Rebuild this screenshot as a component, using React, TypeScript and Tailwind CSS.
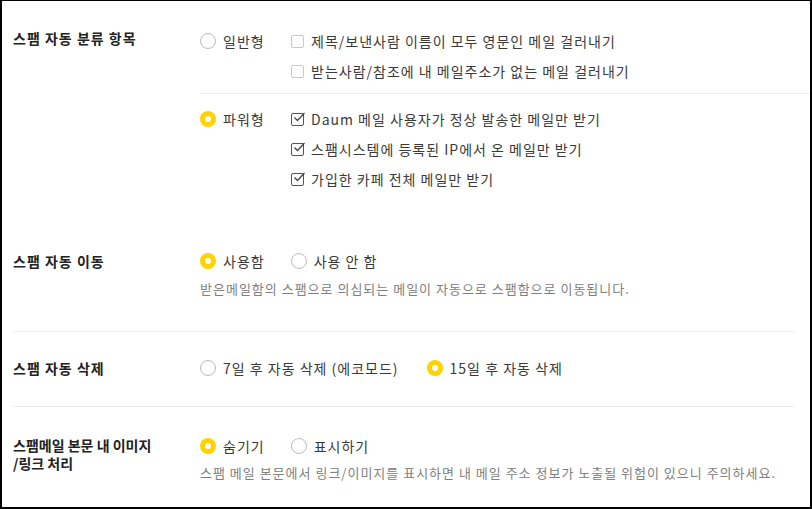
import React from "react";

function Radio({ checked, label }: { checked?: boolean; label: string }) {
    return (
        <label className="flex items-center h-[30px] text-[14px] text-[#3a3a3a]">
            {checked ? (
                <span className="w-4 h-4 rounded-full bg-[#ffd200] flex items-center justify-center">
                    <span className="w-[6px] h-[6px] rounded-full bg-white" />
                </span>
            ) : (
                <span className="w-4 h-4 rounded-full border border-[#bcbcbc] bg-white" />
            )}
            <span className="ml-[7px]">{label}</span>
        </label>
    );
}

function Check({ checked, label }: { checked?: boolean; label: string }) {
    return (
        <label className="flex items-center h-[30px] text-[14px] text-[#3a3a3a]">
            <span className="relative w-[13px] h-[13px]">
                <span className={`absolute inset-0 rounded-[2px] border ${checked ? "border-[#555]" : "border-[#c8c8c8]"}`} />
                {checked && (
                    <svg className="absolute -top-[3px] left-[1px]" width="14" height="14" viewBox="0 0 14 14" fill="none">
                        <path d="M2.5 7.5 L5.5 10.5 L12.5 3" stroke="#444" strokeWidth="1.3" />
                    </svg>
                )}
            </span>
            <span className="ml-[7px]">{label}</span>
        </label>
    );
}

function Desc({ children }: { children: React.ReactNode }) {
    return <p className="text-[13px] leading-[20px] text-[#808080]">{children}</p>;
}

export default function App() {
    return (
        <div
            className="w-[812px] h-[509px] bg-white border-t border-l-2 border-r-2 border-b-2 border-black overflow-hidden tracking-[1px]"
            style={{ fontFamily: '"Noto Sans CJK KR", "Noto Sans", sans-serif' }}
        >
            {/* 스팸 자동 분류 */}
            <div className="flex pt-[25px] pl-[11px]">
                <div className="w-[187px] text-[14px] font-bold text-[#222] leading-[20px] pt-[2px]">스팸 자동 분류 항목</div>
                <div className="flex-1">
                    <div className="flex">
                        <div className="w-[91px]"><Radio label="일반형" /></div>
                        <div>
                            <Check label="제목/보낸사람 이름이 모두 영문인 메일 걸러내기" />
                            <Check label="받는사람/참조에 내 메일주소가 없는 메일 걸러내기" />
                        </div>
                    </div>
                    <div className="h-px bg-[#ececec] mt-[7px] mb-[10px]" />
                    <div className="flex">
                        <div className="w-[91px]"><Radio checked label="파워형" /></div>
                        <div>
                            <Check checked label="Daum 메일 사용자가 정상 발송한 메일만 받기" />
                            <Check checked label="스팸시스템에 등록된 IP에서 온 메일만 받기" />
                            <Check checked label="가입한 카페 전체 메일만 받기" />
                        </div>
                    </div>
                </div>
            </div>

            <div className="pl-[11px] pr-[16px]">
                {/* 스팸 자동 이동 */}
                <div className="flex pt-[52px] pb-[32px] border-b border-[#ececec]">
                    <div className="w-[187px] text-[14px] font-bold text-[#222] leading-[30px]">스팸 자동 이동</div>
                    <div>
                        <div className="flex gap-[26px]">
                            <Radio checked label="사용함" />
                            <Radio label="사용 안 함" />
                        </div>
                        <div className="mt-[3px]">
                            <Desc>받은메일함의 스팸으로 의심되는 메일이 자동으로 스팸함으로 이동됩니다.</Desc>
                        </div>
                    </div>
                </div>

                {/* 스팸 자동 삭제 */}
                <div className="flex pt-[21px] pb-[23px] border-b border-[#ececec]">
                    <div className="w-[187px] text-[14px] font-bold text-[#222] leading-[30px]">스팸 자동 삭제</div>
                    <div className="flex gap-[28px]">
                        <Radio label="7일 후 자동 삭제 (에코모드)" />
                        <Radio checked label="15일 후 자동 삭제" />
                    </div>
                </div>

                {/* 이미지/링크 처리 */}
                <div className="flex pt-[24px]">
                    <div className="w-[187px] text-[14px] font-bold text-[#222] leading-[18px] pt-[5px] tracking-normal">
                        스팸메일 본문 내 이미지
                        <br />
                        /링크 처리
                    </div>
                    <div>
                        <div className="flex gap-[26px]">
                            <Radio checked label="숨기기" />
                            <Radio label="표시하기" />
                        </div>
                        <div className="mt-[2px]">
                            <Desc>스팸 메일 본문에서 링크/이미지를 표시하면 내 메일 주소 정보가 노출될 위험이 있으니 주의하세요.</Desc>
                        </div>
                    </div>
                </div>
            </div>
        </div>
    );
}
